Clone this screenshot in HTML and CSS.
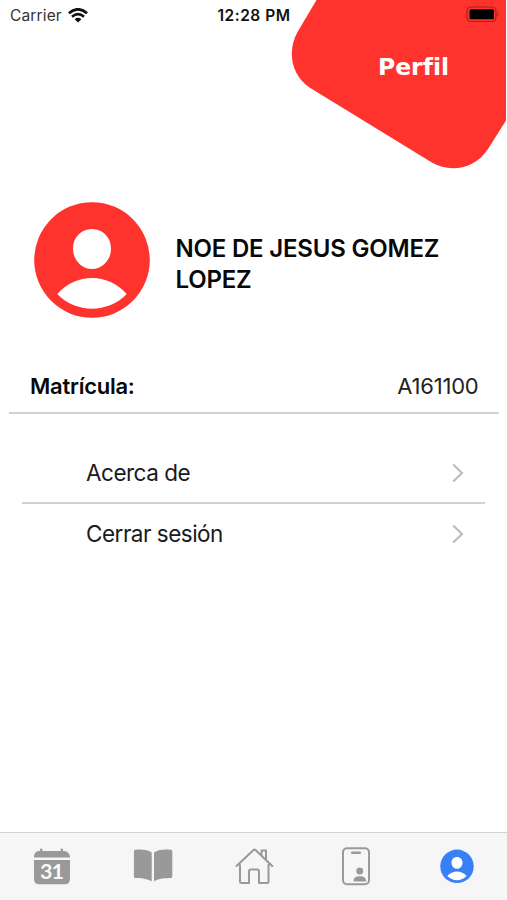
FILE: index.html
```html
<!DOCTYPE html>
<html lang="es">
<head>
<meta charset="utf-8">
<title>Perfil</title>
<link rel="stylesheet" href="styles.css">
</head>
<body>
<div class="screen">
  <header class="header">
    <svg class="header-shape" width="507" height="170" viewBox="0 0 507 170" aria-hidden="true">
      <path fill="#ff332d" d="M316.500 0L297.500 32C287 51 291 75 309.500 87.500L431 162C451 174 476 168 488 149L506 120.500V0Z"/>
    </svg>
    <div class="status">
      <div class="carrier"><span>Carrier</span>
        <svg width="20" height="15" viewBox="0 0 20 15" fill="none" stroke="#111" stroke-width="2.700">
          <path d="M.9 5.200Q10-2.600 19.100 5.200M4 8.700Q10 3.600 16 8.700"/>
          <path fill="#111" stroke="none" d="M6.600 11.200Q10 8.400 13.400 11.200L10 14.600Z"/>
        </svg>
      </div>
      <time class="clock">12:28 PM</time>
      <svg class="battery" width="34" height="17" viewBox="0 0 34 17">
        <rect x="1" y="1" width="29" height="14.500" rx="4" fill="none" stroke="#a8211e" stroke-width="1.200"/>
        <rect x="3.500" y="3.200" width="24.500" height="10" rx="1.500" fill="#000"/>
        <path d="M31.500 6Q34 8.200 31.500 10.500Z" fill="#a8211e"/>
      </svg>
    </div>
    <h1 class="title">Perfil</h1>
  </header>
  <main>
    <section class="profile">
      <svg width="116" height="116" viewBox="0 0 116 116" aria-hidden="true">
        <circle cx="58" cy="58" r="57.800" fill="#ff332d"/>
        <path fill="#fff" d="M58 27C69 27 77 35.500 77 46.500C77 58 68.500 67 58 67S39 58 39 46.500C39 35.500 47 27 58 27ZM23.300 92C42 70.500 74 70.500 92.700 92C74 111.500 42 111.500 23.300 92Z"/>
      </svg>
      <h2 class="name">NOE DE JESUS GOMEZ LOPEZ</h2>
    </section>
    <div class="record"><strong class="label">Matrícula:</strong><span class="value">A161100</span></div>
    <ul class="menu">
      <li class="item"><span>Acerca de</span>
        <svg width="12" height="20" viewBox="0 0 12 20"><path d="M1.200 1.500L10 10L1.200 18.500" fill="none" stroke="#bdbdbf" stroke-width="2.200"/></svg></li>
      <li class="item"><span>Cerrar sesión</span>
        <svg width="12" height="20" viewBox="0 0 12 20"><path d="M1.200 1.500L10 10L1.200 18.500" fill="none" stroke="#bdbdbf" stroke-width="2.200"/></svg></li>
    </ul>
  </main>
  <nav class="tabs">
    <a class="tab"><svg width="40" height="40" viewBox="0 0 40 40">
      <path fill="#999" d="M2 11.500C2 7.500 3.500 5 8 5V3.500Q8 2.500 9.200 2.500T10.400 3.500V5H28.600V3.500Q28.600 2.500 29.800 2.500T31 3.500V5C35.500 5 38 7.500 38 11.500ZM2 14H38V33Q38 38.300 32.700 38.300H7.300Q2 38.300 2 33Z"/>
      <text class="date" x="19.500" y="33" text-anchor="middle">31</text></svg></a>
    <a class="tab"><svg width="40" height="40" viewBox="0 0 40 40">
      <path fill="#999" d="M.9 5.500Q.9 4 2.400 3.800C8 3.300 14 3.500 18.700 6.500V35.500C13 32 7 32.300 2.400 32Q.9 32 .9 30.500ZM21 6.500C26 3.500 32 3.300 37.800 3.800Q39.300 4 39.300 5.500V30.500Q39.300 32 37.800 32C32 32.300 26 32 21 35.500Z"/></svg></a>
    <a class="tab"><svg width="40" height="40" viewBox="0 0 40 40" fill="none" stroke="#999" stroke-width="2" stroke-linejoin="round" stroke-linecap="round">
      <path d="M6 19V35.500Q6 37 7.500 37H15V25.500Q15 23.500 17 23.500H23Q25 23.500 25 25.500V37H33Q34.500 37 34.500 35.500V19M2.500 20L19.500 4Q20.500 3.100 21.500 4L38.200 20M27.500 9V4.500H32V13.500"/></svg></a>
    <a class="tab"><svg width="40" height="40" viewBox="0 0 40 40">
      <rect x="7" y="2.300" width="26" height="36" rx="4" fill="none" stroke="#999" stroke-width="2"/>
      <rect x="15" y="5.500" width="10" height="2.500" rx="1" fill="#999"/>
      <circle cx="23.700" cy="25" r="3.500" fill="#999"/>
      <path fill="#999" d="M17.500 35.500C17.300 31.500 20 30.200 23.700 30.200S30.300 31.500 30.100 35.500Z"/></svg></a>
    <a class="tab"><svg width="40" height="40" viewBox="0 0 116 116">
      <circle cx="58" cy="59" r="48.500" fill="#397ff7"/>
      <path fill="#fff" d="M58 32C67.500 32 74 39 74 48.500C74 58 67.500 66 58 66S42 58 42 48.500C42 39 48.500 32 58 32ZM30 87C44 69.500 72 69.500 86 87C72 103 44 103 30 87Z"/></svg></a>
  </nav>
</div>
</body>
</html>
```

FILE: styles.css
```css
* { box-sizing: border-box; }
body { margin: 0; background: #fff; color: #080808; font-family: Inter, "Liberation Sans", sans-serif; }
.screen { width: 507px; height: 900px; display: flex; flex-direction: column; }
main { flex: 1; }
.header { position: relative; height: 170px; }
.header-shape { position: absolute; inset: 0; }
.status { position: relative; height: 30px; display: grid; grid-template-columns: 1fr auto 1fr; align-items: center; padding: 0 9px 0 10px; }
.carrier { display: flex; align-items: center; gap: 6px; font-size: 15.5px; letter-spacing: .15px; line-height: 20px; color: #333; }
.carrier span { padding-top: 1px; }
.clock { padding-top: 1px; font-size: 15.5px; letter-spacing: .5px; font-weight: 600; line-height: 20px; color: #111; }
.battery { justify-self: end; margin-right: -2px; margin-bottom: 2px; }
.title { position: relative; margin: 22px 58px 0 0; text-align: right; color: #fff; font: bold 23.5px/30px "DejaVu Sans", sans-serif; }
.profile { height: 180px; padding: 32px 34px 0; display: flex; gap: 25.5px; align-items: flex-start; }
.profile svg { flex: none; }
.name { margin: 31px 0 0; width: 285px; font-size: 24px; letter-spacing: -.2px; font-weight: 600; line-height: 31px; }
.record { height: 64px; margin: 0 8.5px 0 9px; padding: 16px 20px 0 21px; display: flex; justify-content: space-between; border-bottom: 2px solid #d2d2d2; font-size: 22px; line-height: 40px; }
.label { font-weight: 600; letter-spacing: -.25px; }
.value { color: #222; letter-spacing: -.2px; }
.menu { list-style: none; margin: 30px 22px 0; padding: 0; }
.item { height: 60px; padding: 0 21px 0 64px; display: flex; justify-content: space-between; align-items: center; font-size: 22.5px; letter-spacing: -.5px; color: #1a1a1a; }
.item span { padding-bottom: 2px; }
.item:first-child { border-bottom: 2px solid #d2d2d2; }
.tabs { height: 68px; padding: 13px 0 0 1.5px; display: grid; grid-template-columns: repeat(5, 101.2px); align-items: start; justify-items: center; background: #f6f6f6; border-top: 1px solid #d2d2d2; }
.tab { display: flex; }
.date { font: bold 21.5px Lato, sans-serif; letter-spacing: -1px; fill: #f8f8f8; }
```
